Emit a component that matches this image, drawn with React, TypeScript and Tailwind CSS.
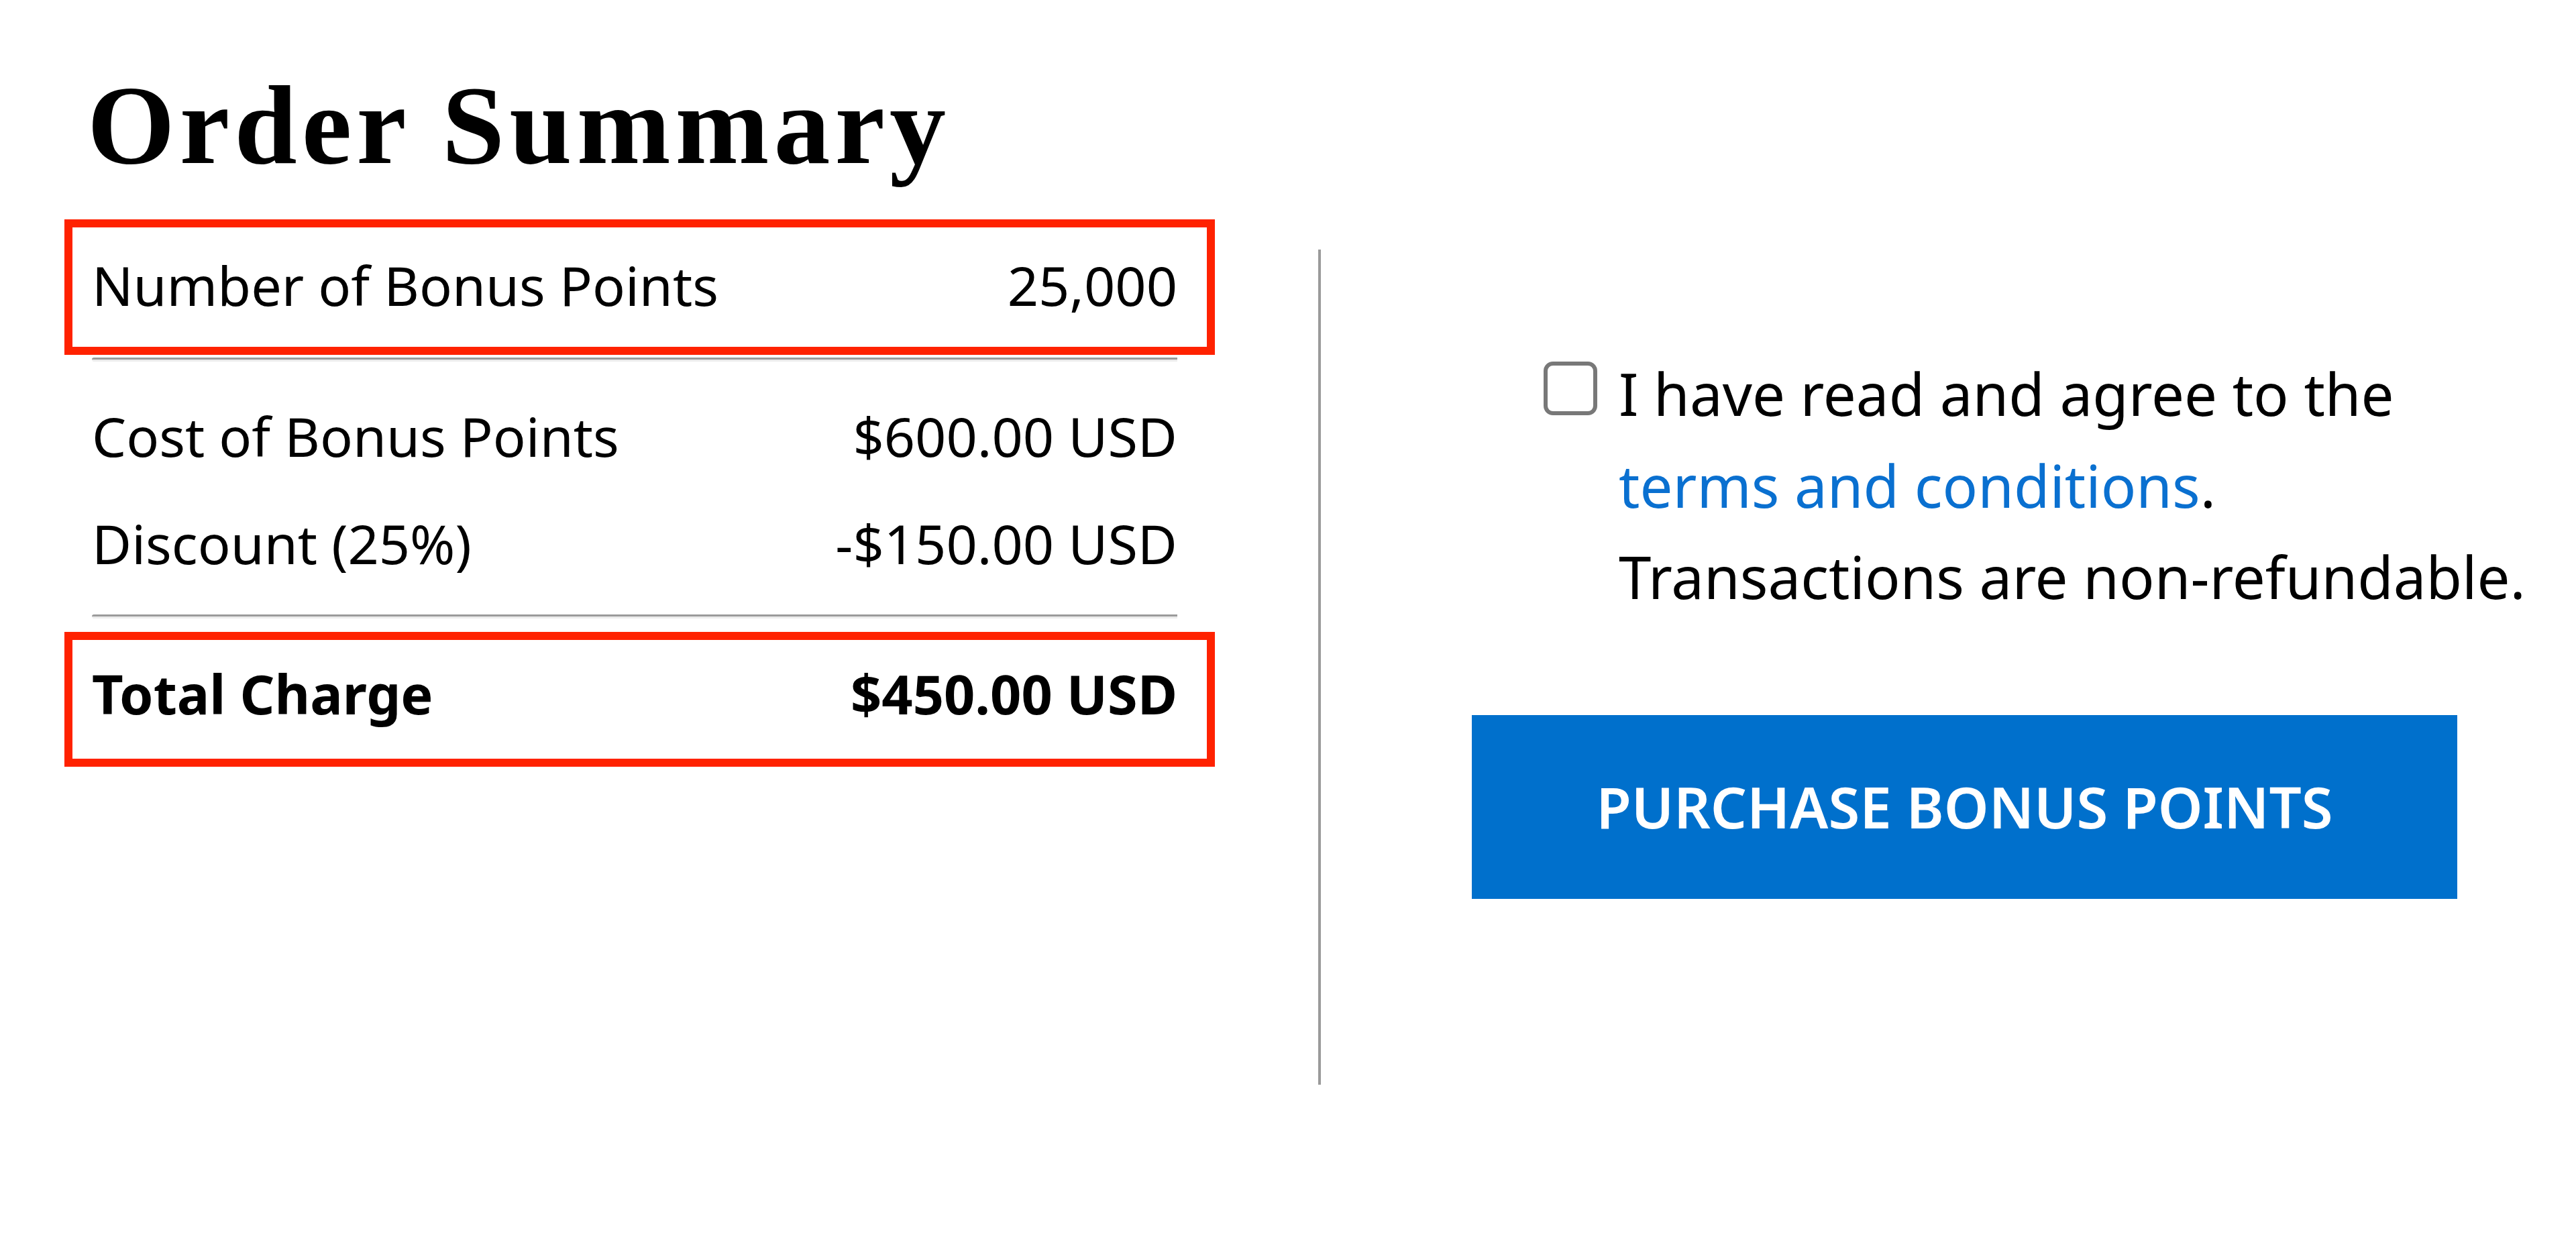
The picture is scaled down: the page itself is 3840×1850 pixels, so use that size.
import React from "react";

function Rule() {
  return (
    <div className="h-[6px] w-full rounded-l-[3px] border-t-[3px] border-b-[3px] border-t-[#9b9b9b] border-b-[#ececec]" />
  );
}

export default function App() {
  return (
    <div className="min-h-[1850px] w-[3840px] bg-white text-black" style={{ fontFamily: '"Noto Sans", "Open Sans", sans-serif' }}>
      <div className="flex items-start">
        {/* Left column */}
        <div className="ml-[137px] w-[1618px] shrink-0">
          <h1
            className="mt-[102px] -ml-[7px] text-[168px] font-bold leading-none tracking-[7px]"
            style={{ fontFamily: '"Liberation Serif", "DejaVu Serif", serif' }}
          >
            Order Summary
          </h1>

          <div className="relative mt-[99px] flex justify-between text-[81px] leading-[112px]">
            <span>Number of Bonus Points</span>
            <span>25,000</span>
            <div className="pointer-events-none absolute -top-[42px] -bottom-[48px] -left-[41px] -right-[56px] border-[12px] border-[#ff2200]" />
          </div>

          <div className="mt-[52px]">
            <Rule />
          </div>

          <div className="mt-[55px] flex justify-between text-[81px] leading-[112px]">
            <span>Cost of Bonus Points</span>
            <span>$600.00 USD</span>
          </div>
          <div className="mt-[48px] flex justify-between text-[81px] leading-[112px]">
            <span>Discount (25%)</span>
            <span>-$150.00 USD</span>
          </div>

          <div className="mt-[50px]">
            <Rule />
          </div>

          <div className="relative mt-[56px] flex justify-between text-[81px] font-bold leading-[112px]">
            <span>Total Charge</span>
            <span>$450.00 USD</span>
            <div className="pointer-events-none absolute -top-[36px] -bottom-[53px] -left-[41px] -right-[56px] border-[12px] border-[#ff2200]" />
          </div>
        </div>

        {/* Divider */}
        <div className="ml-[210px] mt-[372px] h-[1245px] w-[4px] shrink-0 bg-[#9a9a9a]" />

        {/* Right column */}
        <div className="ml-[225px] flex flex-col">
          <div className="mt-[518px] ml-[107px] flex items-start">
            <span className="mt-[21px] block h-[80px] w-[80px] shrink-0 rounded-[14px] border-[6px] border-[#787878] bg-white" />
            <p className="ml-[32px] text-[87px] leading-[136.5px]">
              I have read and agree to the
              <br />
              <a href="#" className="text-[#0a70d0]">terms and conditions</a>.
              <br />
              Transactions are non-refundable.
            </p>
          </div>

          <button className="mt-[138px] flex h-[274px] w-[1469px] items-center justify-center bg-[#0070cc] text-[85px] font-semibold text-white">
            PURCHASE BONUS POINTS
          </button>
        </div>
      </div>
    </div>
  );
}
